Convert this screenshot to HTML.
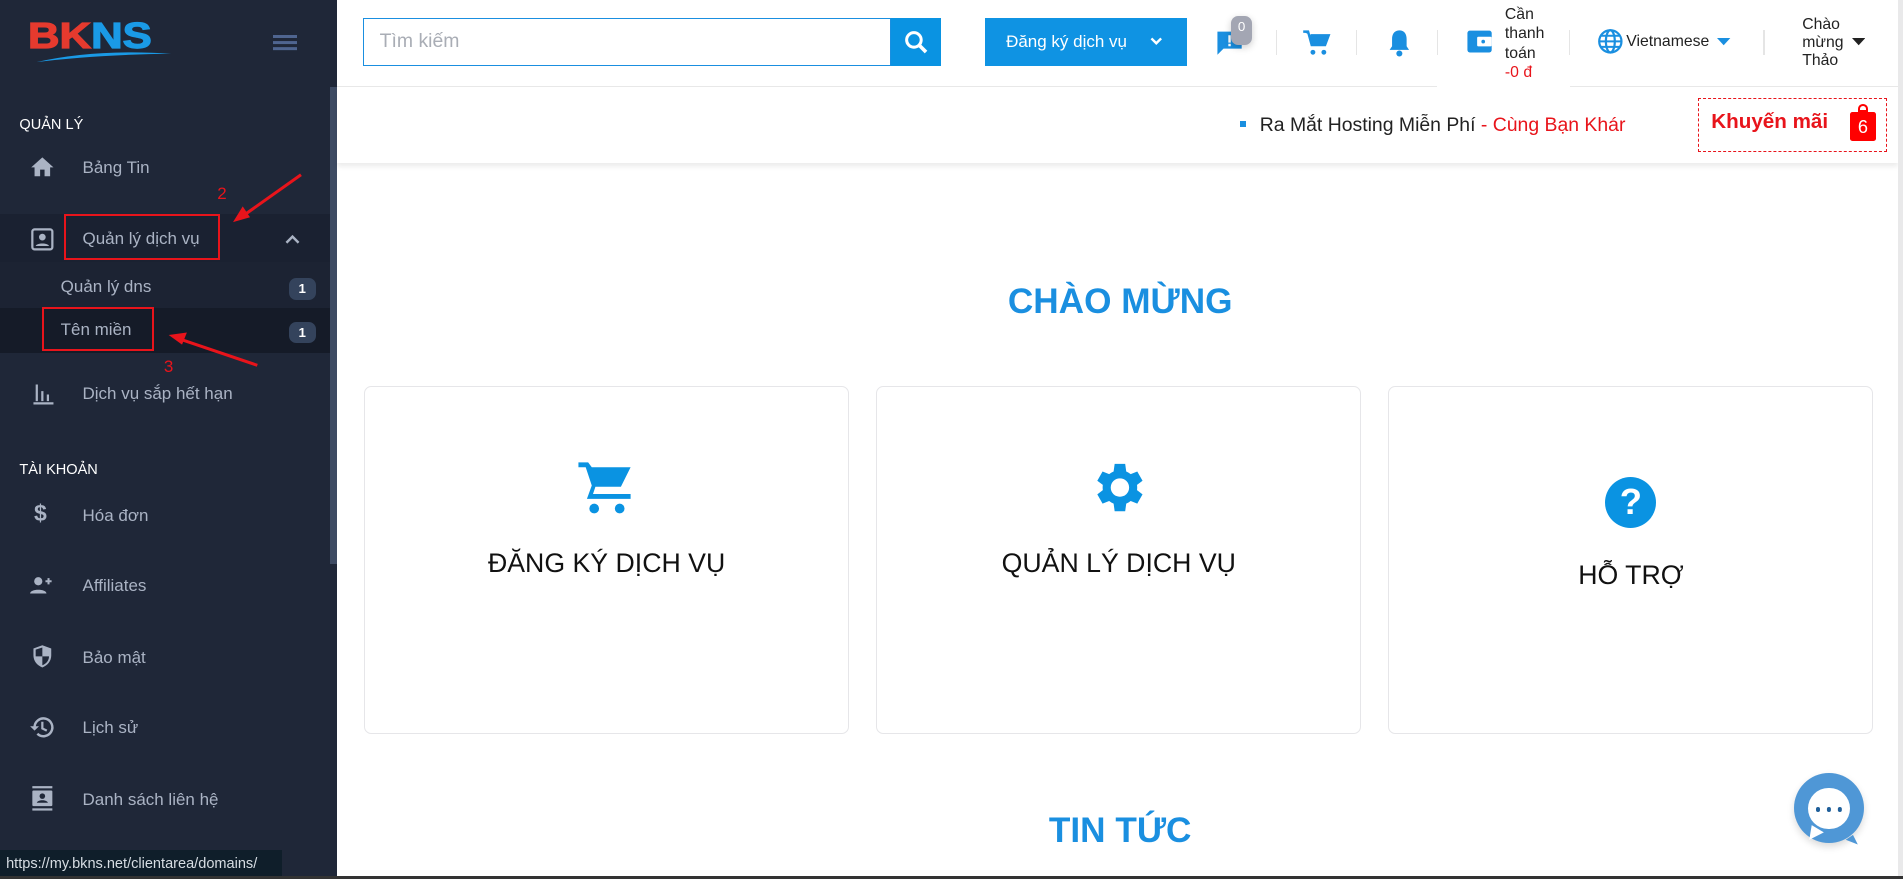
<!DOCTYPE html>
<html><head><meta charset="utf-8"><style>
html,body{margin:0;padding:0;overflow:hidden}
body{width:1903px;height:879px;background:#fff;font-family:"Liberation Sans",Arial,sans-serif}
#w{position:relative;width:1568px;height:724px;zoom:1.21365;overflow:hidden;background:#fff}
.a{position:absolute}
#sb{left:0;top:0;width:278px;height:724px;background:#1f2738}
.sec{color:#fff;font-size:12px;left:16px}
.it{color:#aab3c4;font-size:14px;left:68px}
.ic{left:24px;width:22px;height:22px}
.badge{left:238px;width:22px;height:18px;border-radius:6px;background:#34435c;color:#fff;font-size:11px;text-align:center;line-height:18px;font-weight:bold}
.card{border:1px solid #e6e6e9;border-radius:6px;top:318px;height:285px;background:#fff}
.ct{font-size:22px;color:#111;text-align:center;width:100%}
.div{width:1px;height:20px;background:#e5e5e5;top:25px}
</style></head><body><div id="w">
<div id="sb" class="a"></div>
<!-- logo -->
<div class="a" style="left:23px;top:15px;font:900 30px/30px 'Liberation Sans',sans-serif;letter-spacing:0px;transform:scaleX(1.2);transform-origin:left;-webkit-text-stroke:1px"><span style="color:#e63a2e;-webkit-text-stroke-color:#e63a2e">BK</span><span style="color:#1a9ae6;-webkit-text-stroke-color:#1a9ae6">NS</span></div>
<svg class="a" style="left:28px;top:41px" width="115" height="12"><path d="M2 10 Q50 -1 113 3 Q50 4 2 10Z" fill="#1a9ae6"/></svg>
<div class="a" style="left:225px;top:29px;width:20px;height:2px;background:#4f6590;box-shadow:0 5px 0 #4f6590,0 10px 0 #4f6590"></div>
<div class="a" style="left:272px;top:72px;width:6px;height:393px;background:#3e4b63"></div>
<div class="a sec" style="top:96px">QUẢN LÝ</div>
<svg class="a ic" style="top:127px" viewBox="0 0 24 24"><path d="M10 20v-6h4v6h5v-8h3L12 3 2 12h3v8z" fill="#aab3c4"/></svg>
<div class="a it" style="top:130px">Bảng Tin</div>
<div class="a" style="left:0;top:176px;width:272px;height:40px;background:#1a2131"></div>
<div class="a" style="left:0;top:216px;width:272px;height:38px;background:#1c2333"></div>
<div class="a" style="left:0;top:254px;width:272px;height:37px;background:#151b28"></div>
<svg class="a ic" style="top:186px" viewBox="0 0 24 24"><rect x="3" y="3" width="18" height="18" rx="2" fill="none" stroke="#aab3c4" stroke-width="2"/><circle cx="12" cy="10" r="3" fill="#aab3c4"/><path d="M6 18c1-3 11-3 12 0z" fill="#aab3c4"/></svg>
<div class="a it" style="top:189px">Quản lý dịch vụ</div>
<svg class="a" style="left:234px;top:192px" width="14" height="10"><path d="M2 8l5-5 5 5" stroke="#aab3c4" stroke-width="2" fill="none"/></svg>
<div class="a it" style="left:50px;top:228px">Quản lý dns</div>
<div class="a badge" style="top:229px">1</div>
<div class="a it" style="left:50px;top:264px">Tên miền</div>
<div class="a badge" style="top:265px">1</div>
<div class="a" style="left:53px;top:176px;width:125px;height:35px;border:2px solid #e8141b"></div>
<div class="a" style="left:35px;top:253px;width:89px;height:33px;border:2px solid #e8141b"></div>
<div class="a" style="left:179px;top:152px;color:#e8141b;font-size:14px">2</div>
<div class="a" style="left:135px;top:294px;color:#e8141b;font-size:14px">3</div>
<svg class="a" style="left:0;top:0" width="278" height="320"><path d="M248 144L200 178" stroke="#e8141b" stroke-width="2.5"/><path d="M192 183l8-13 6 9z" fill="#e8141b"/><path d="M212 301L150 280" stroke="#e8141b" stroke-width="2.5"/><path d="M139 276l15-2-4 10z" fill="#e8141b"/></svg>
<svg class="a ic" style="top:313px" viewBox="0 0 24 24"><path d="M6 4h2v15H6zM11 10h2v9h-2zM16 13h2v6h-2zM4 20h18v2H4z" fill="#aab3c4"/></svg>
<div class="a it" style="top:316px">Dịch vụ sắp hết hạn</div>
<div class="a sec" style="top:381px">TÀI KHOẢN</div>
<div class="a" style="left:28px;top:412px;color:#aab3c4;font:bold 19px 'Liberation Sans'">$</div>
<div class="a it" style="top:417px">Hóa đơn</div>
<svg class="a ic" style="top:471px;left:23px" viewBox="0 0 26 24"><circle cx="10" cy="8" r="4" fill="#aab3c4"/><path d="M2 20c0-5 16-5 16 0z" fill="#aab3c4"/><path d="M20 5v6M17 8h6" stroke="#aab3c4" stroke-width="2"/></svg>
<div class="a it" style="top:475px">Affiliates</div>
<svg class="a ic" style="top:530px" viewBox="0 0 24 24"><path d="M12 2L4 5v6c0 5 3 9 8 11 5-2 8-6 8-11V5z" fill="#aab3c4"/><path d="M12 4v8h6c0 4-3 7-6 8v-8H6V6z" fill="#1f2738"/></svg>
<div class="a it" style="top:534px">Bảo mật</div>
<svg class="a ic" style="top:588px" viewBox="0 0 24 24"><path d="M5 12a8 8 0 1 1 2.5 5.8" fill="none" stroke="#aab3c4" stroke-width="2.2"/><path d="M1 11l4 4 4-4z" fill="#aab3c4"/><path d="M12 7v6l4 2" stroke="#aab3c4" stroke-width="2" fill="none"/></svg>
<div class="a it" style="top:592px">Lịch sử</div>
<svg class="a ic" style="top:647px" viewBox="0 0 24 24"><rect x="3" y="1" width="18" height="2" fill="#aab3c4"/><rect x="3" y="21" width="18" height="2" fill="#aab3c4"/><rect x="3" y="5" width="18" height="14" rx="1" fill="#aab3c4"/><circle cx="12" cy="10" r="2.5" fill="#1f2738"/><path d="M7 16c1-3 9-3 10 0z" fill="#1f2738"/></svg>
<div class="a it" style="top:651px">Danh sách liên hệ</div>
<div class="a" style="left:0;top:700px;width:232px;height:24px;background:#0f1e2a;color:#d7dde3;font-size:12px;line-height:24px;padding-left:5px;box-sizing:border-box">https://my.bkns.net/clientarea/domains/</div>

<!-- header -->
<div class="a" style="left:278px;top:71px;width:1290px;height:1px;background:#e8e8e8"></div>
<div class="a" style="left:278px;top:72px;width:1286px;height:62px;background:#fff;box-shadow:0 3px 4px rgba(0,0,0,0.08)"></div>
<div class="a" style="left:299px;top:15px;width:435px;height:39px;border:1px solid #1a8fe0;box-sizing:border-box;color:#a9adb5;font-size:16px;line-height:37px;padding-left:13px">Tìm kiếm</div>
<div class="a" style="left:734px;top:15px;width:41px;height:39px;background:#0a93e2"></div>
<svg class="a" style="left:744px;top:24px" width="22" height="22" viewBox="0 0 22 22"><circle cx="9" cy="9" r="6" stroke="#fff" stroke-width="2.5" fill="none"/><path d="M13 13l6 6" stroke="#fff" stroke-width="3"/></svg>
<div class="a" style="left:812px;top:15px;width:166px;height:39px;background:#0f93e3;color:#fff;font-size:14px;line-height:39px;padding-left:17px;box-sizing:border-box">Đăng ký dịch vụ</div>
<svg class="a" style="left:947px;top:30px" width="12" height="9"><path d="M2 2l4 4 4-4" stroke="#fff" stroke-width="2" fill="none"/></svg>
<svg class="a" style="left:1001px;top:23px" width="24" height="24" viewBox="0 0 24 24"><path d="M2 3h20v14H7l-5 5z" fill="#1a8fe0"/><path d="M11 6h2v6h-2zM11 13h2v2h-2z" fill="#fff"/></svg>
<div class="a" style="left:1014px;top:13px;width:18px;height:24px;border-radius:6px;background:#a3a6b3;color:#fff;font-size:11px;text-align:center;line-height:18px;box-shadow:0 2px 6px rgba(0,0,0,.2)">0</div>
<div class="a div" style="left:1051px"></div>
<svg class="a" style="left:1073px;top:23px" width="24" height="24" viewBox="0 0 24 24"><path d="M1 3h4l3 11h11l3-8H7" fill="#1a8fe0" stroke="#1a8fe0" stroke-width="2"/><circle cx="9" cy="20" r="2" fill="#1a8fe0"/><circle cx="18" cy="20" r="2" fill="#1a8fe0"/></svg>
<div class="a div" style="left:1117px"></div>
<svg class="a" style="left:1142px;top:23px" width="22" height="24" viewBox="0 0 22 24"><path d="M11 2c4 0 6 3 6 7v6l2 3H3l2-3V9c0-4 2-7 6-7z" fill="#1a8fe0"/><circle cx="11" cy="21" r="2.5" fill="#1a8fe0"/></svg>
<div class="a div" style="left:1184px"></div>
<div class="a" style="left:1184px;top:58px;width:110px;height:14px;background:#fff"></div>
<svg class="a" style="left:1207px;top:22px" width="24" height="24" viewBox="0 0 24 24"><rect x="2" y="3" width="20" height="18" rx="2" fill="#1a8fe0"/><rect x="10" y="8" width="12" height="8" rx="1" fill="#fff"/><circle cx="15" cy="12" r="1.5" fill="#1a8fe0"/></svg>
<div class="a" style="left:1240px;top:4px;font-size:13px;line-height:16px;color:#222">Cần<br>thanh<br>toán<br><span style="color:#e8141b">-0 đ</span></div>
<div class="a div" style="left:1293px"></div>
<svg class="a" style="left:1316px;top:23px" width="22" height="22" viewBox="0 0 24 24"><circle cx="12" cy="12" r="10" fill="none" stroke="#1a8fe0" stroke-width="2"/><ellipse cx="12" cy="12" rx="4" ry="10" fill="none" stroke="#1a8fe0" stroke-width="2"/><path d="M2 12h20M4 7h16M4 17h16" stroke="#1a8fe0" stroke-width="1.8"/></svg>
<div class="a" style="left:1340px;top:27px;font-size:13px;color:#222">Vietnamese</div>
<svg class="a" style="left:1415px;top:31px" width="12" height="8"><path d="M0 0h11L5.5 6z" fill="#1a8fe0"/></svg>
<div class="a div" style="left:1453px"></div>
<div class="a" style="left:1485px;top:13px;font-size:13px;line-height:15px;color:#222">Chào<br>mừng<br>Thảo</div>
<svg class="a" style="left:1526px;top:31px" width="11" height="7"><path d="M0 0h11L5.5 6z" fill="#222"/></svg>

<div class="a" style="left:1022px;top:100px;width:5px;height:5px;background:#1a8fe0"></div>
<div class="a" style="left:1038px;top:94px;font-size:16px;color:#222">Ra Mắt Hosting Miễn Phí <span style="color:#e8141b">- Cùng Bạn Khár</span></div>
<div class="a" style="left:1399px;top:81px;width:156px;height:44px;border:1px dashed #e8141b;box-sizing:border-box"></div>
<div class="a" style="left:1410px;top:91px;font-size:17px;font-weight:bold;color:#e8141b">Khuyến mãi</div>
<div class="a" style="left:1524px;top:92px;width:22px;height:24px;background:#f00;color:#fff;font-size:15px;text-align:center;line-height:26px;border-radius:2px">6</div>
<div class="a" style="left:1531px;top:86px;width:8px;height:6px;border:2px solid #f00;border-radius:4px 4px 0 0;box-sizing:border-box"></div>

<!-- main -->
<div class="a" style="left:278px;top:232px;width:1290px;text-align:center;font-size:29px;font-weight:bold;color:#1a8fe0">CHÀO MỪNG</div>
<div class="a card" style="left:300px;width:398px"><svg class="a" style="left:174px;top:60px" width="48" height="46" viewBox="0 0 48 46"><path d="M2 2h8l3 4h32l-8 16H16l-2 6h31v4H9l4-11L8 6H2z" fill="#0a93e2"/><circle cx="15" cy="40" r="4" fill="#0a93e2"/><circle cx="36" cy="40" r="4" fill="#0a93e2"/></svg><div class="a ct" style="top:133px">ĐĂNG KÝ DỊCH VỤ</div></div>
<div class="a card" style="left:722px;width:398px"><svg class="a" style="left:172px;top:57px" width="52" height="52" viewBox="0 0 24 24"><path d="M19.4 13a7.5 7.5 0 0 0 0-2l2.1-1.6-2-3.5-2.5 1a7 7 0 0 0-1.7-1L14.9 3h-4l-.4 2.9a7 7 0 0 0-1.7 1l-2.5-1-2 3.5L6.4 11a7.5 7.5 0 0 0 0 2l-2.1 1.6 2 3.5 2.5-1a7 7 0 0 0 1.7 1l.4 2.9h4l.4-2.9a7 7 0 0 0 1.7-1l2.5 1 2-3.5zM12.9 15.5a3.5 3.5 0 1 1 0-7 3.5 3.5 0 0 1 0 7z" fill="#0a93e2"/></svg><div class="a ct" style="top:133px">QUẢN LÝ DỊCH VỤ</div></div>
<div class="a card" style="left:1144px;width:398px"><div class="a" style="left:178px;top:74px;width:42px;height:42px;border-radius:50%;background:#0a93e2;color:#fff;font:bold 30px 'Liberation Sans';text-align:center;line-height:42px">?</div><div class="a ct" style="top:143px">HỖ TRỢ</div></div>
<div class="a" style="left:278px;top:668px;width:1290px;text-align:center;font-size:29px;font-weight:bold;color:#1a8fe0">TIN TỨC</div>
<div class="a" style="left:1478px;top:637px;width:58px;height:58px;border-radius:50%;background:#4f97d6;box-shadow:0 3px 6px rgba(0,0,0,.15)"></div>
<div class="a" style="left:1490px;top:649px;width:34px;height:34px;border-radius:50%;background:#fff"></div>
<svg class="a" style="left:1485px;top:670px" width="60" height="30"><path d="M8 10l-2 12 12-6z" fill="#fff"/><path d="M42 18l4 8-10-4z" fill="#4f97d6"/></svg>
<div class="a" style="left:1496px;top:665px;width:4px;height:4px;border-radius:50%;background:#1f5f9a;box-shadow:9px 0 0 #1f5f9a,18px 0 0 #1f5f9a"></div>
<div class="a" style="left:1564px;top:0;width:4px;height:724px;background:#e9e9ea"></div>
<div class="a" style="left:0;top:722px;width:1568px;height:2px;background:#333"></div>
</div></body></html>
